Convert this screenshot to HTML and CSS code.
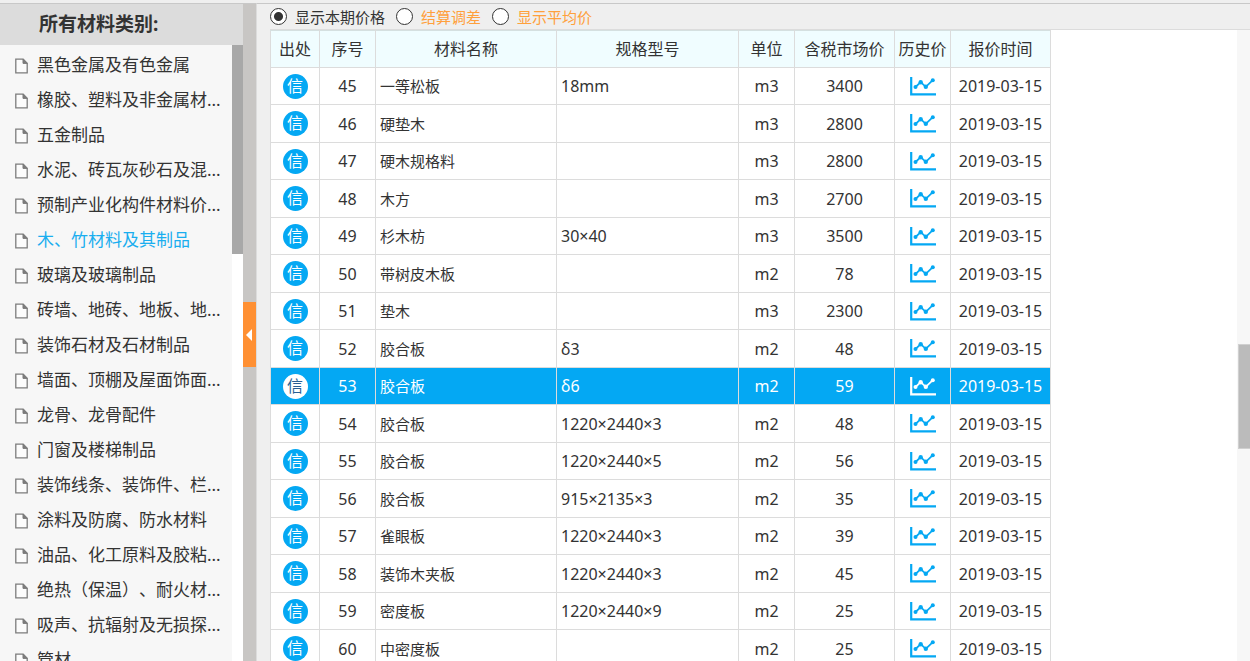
FILE: index.html
```html
<!DOCTYPE html>
<html lang="zh-CN">
<head>
<meta charset="utf-8">
<title>材料价格</title>
<link rel="stylesheet" href="styles.css">
</head>
<body>
<svg class="sprite" aria-hidden="true">
  <symbol id="doc" viewBox="0 0 13 16"><path d="M.8 1.2h7.4l4 4v9.6H.8z" fill="#fcfcfc" stroke="#7d7d7d" stroke-width="1.3"/><path d="M8 1.2v4.2h4.2z" fill="#7d7d7d" stroke="#7d7d7d"/></symbol>
  <symbol id="chart" viewBox="0 0 26 19"><path d="M1.2 0v17.3H26" fill="none" stroke="currentColor" stroke-width="2.2"/><path d="M5.5 10l5.2-4.8 5.1 4.6 7-6.6" fill="none" stroke="currentColor" stroke-width="1.8"/><g fill="currentColor"><circle cx="5.5" cy="10" r="2"/><circle cx="10.7" cy="5.2" r="2.2"/><circle cx="15.8" cy="9.8" r="2.2"/><circle cx="22.8" cy="3.2" r="2"/></g></symbol>
</svg>
<div class="app">
  <aside class="sidebar">
    <h2 class="sidebar-title">所有材料类别:</h2>
    <div class="sidebar-body">
      <nav class="categories">
        <a href="#"><svg><use href="#doc"/></svg>黑色金属及有色金属</a>
        <a href="#"><svg><use href="#doc"/></svg>橡胶、塑料及非金属材...</a>
        <a href="#"><svg><use href="#doc"/></svg>五金制品</a>
        <a href="#"><svg><use href="#doc"/></svg>水泥、砖瓦灰砂石及混...</a>
        <a href="#"><svg><use href="#doc"/></svg>预制产业化构件材料价...</a>
        <a href="#" class="current"><svg><use href="#doc"/></svg>木、竹材料及其制品</a>
        <a href="#"><svg><use href="#doc"/></svg>玻璃及玻璃制品</a>
        <a href="#"><svg><use href="#doc"/></svg>砖墙、地砖、地板、地...</a>
        <a href="#"><svg><use href="#doc"/></svg>装饰石材及石材制品</a>
        <a href="#"><svg><use href="#doc"/></svg>墙面、顶棚及屋面饰面...</a>
        <a href="#"><svg><use href="#doc"/></svg>龙骨、龙骨配件</a>
        <a href="#"><svg><use href="#doc"/></svg>门窗及楼梯制品</a>
        <a href="#"><svg><use href="#doc"/></svg>装饰线条、装饰件、栏...</a>
        <a href="#"><svg><use href="#doc"/></svg>涂料及防腐、防水材料</a>
        <a href="#"><svg><use href="#doc"/></svg>油品、化工原料及胶粘...</a>
        <a href="#"><svg><use href="#doc"/></svg>绝热（保温）、耐火材...</a>
        <a href="#"><svg><use href="#doc"/></svg>吸声、抗辐射及无损探...</a>
        <a href="#"><svg><use href="#doc"/></svg>管材</a>
      </nav>
      <div class="side-track"><div class="side-thumb"></div></div>
    </div>
  </aside>
  <div class="splitter"><button class="collapse" type="button" aria-label="收起"><svg viewBox="0 0 6 12"><path d="M6 0v12L0 6z" fill="#fff"/></svg></button></div>
  <main class="content">
    <form class="modes">
      <label><input type="radio" name="mode" checked><span>显示本期价格</span></label>
      <label class="accent"><input type="radio" name="mode"><span>结算调差</span></label>
      <label class="accent"><input type="radio" name="mode"><span>显示平均价</span></label>
    </form>
    <div class="panel">
      <div class="table-area">
        <table class="prices">
          <colgroup><col class="c-source"><col class="c-small"><col class="c-name"><col class="c-spec"><col class="c-small"><col class="c-wide"><col class="c-small"><col class="c-wide"></colgroup>
          <thead><tr><th>出处</th><th>序号</th><th>材料名称</th><th>规格型号</th><th>单位</th><th>含税市场价</th><th>历史价</th><th>报价时间</th></tr></thead>
          <tbody>
            <tr><td><span class="badge">信</span></td><td>45</td><td class="name">一等松板</td><td class="spec">18mm</td><td>m3</td><td>3400</td><td><button class="history" type="button" aria-label="历史价"><svg><use href="#chart"/></svg></button></td><td>2019-03-15</td></tr>
            <tr><td><span class="badge">信</span></td><td>46</td><td class="name">硬垫木</td><td class="spec"></td><td>m3</td><td>2800</td><td><button class="history" type="button" aria-label="历史价"><svg><use href="#chart"/></svg></button></td><td>2019-03-15</td></tr>
            <tr><td><span class="badge">信</span></td><td>47</td><td class="name">硬木规格料</td><td class="spec"></td><td>m3</td><td>2800</td><td><button class="history" type="button" aria-label="历史价"><svg><use href="#chart"/></svg></button></td><td>2019-03-15</td></tr>
            <tr><td><span class="badge">信</span></td><td>48</td><td class="name">木方</td><td class="spec"></td><td>m3</td><td>2700</td><td><button class="history" type="button" aria-label="历史价"><svg><use href="#chart"/></svg></button></td><td>2019-03-15</td></tr>
            <tr><td><span class="badge">信</span></td><td>49</td><td class="name">杉木枋</td><td class="spec">30×40</td><td>m3</td><td>3500</td><td><button class="history" type="button" aria-label="历史价"><svg><use href="#chart"/></svg></button></td><td>2019-03-15</td></tr>
            <tr><td><span class="badge">信</span></td><td>50</td><td class="name">带树皮木板</td><td class="spec"></td><td>m2</td><td>78</td><td><button class="history" type="button" aria-label="历史价"><svg><use href="#chart"/></svg></button></td><td>2019-03-15</td></tr>
            <tr><td><span class="badge">信</span></td><td>51</td><td class="name">垫木</td><td class="spec"></td><td>m3</td><td>2300</td><td><button class="history" type="button" aria-label="历史价"><svg><use href="#chart"/></svg></button></td><td>2019-03-15</td></tr>
            <tr><td><span class="badge">信</span></td><td>52</td><td class="name">胶合板</td><td class="spec">δ3</td><td>m2</td><td>48</td><td><button class="history" type="button" aria-label="历史价"><svg><use href="#chart"/></svg></button></td><td>2019-03-15</td></tr>
            <tr class="selected"><td><span class="badge">信</span></td><td>53</td><td class="name">胶合板</td><td class="spec">δ6</td><td>m2</td><td>59</td><td><button class="history" type="button" aria-label="历史价"><svg><use href="#chart"/></svg></button></td><td>2019-03-15</td></tr>
            <tr><td><span class="badge">信</span></td><td>54</td><td class="name">胶合板</td><td class="spec">1220×2440×3</td><td>m2</td><td>48</td><td><button class="history" type="button" aria-label="历史价"><svg><use href="#chart"/></svg></button></td><td>2019-03-15</td></tr>
            <tr><td><span class="badge">信</span></td><td>55</td><td class="name">胶合板</td><td class="spec">1220×2440×5</td><td>m2</td><td>56</td><td><button class="history" type="button" aria-label="历史价"><svg><use href="#chart"/></svg></button></td><td>2019-03-15</td></tr>
            <tr><td><span class="badge">信</span></td><td>56</td><td class="name">胶合板</td><td class="spec">915×2135×3</td><td>m2</td><td>35</td><td><button class="history" type="button" aria-label="历史价"><svg><use href="#chart"/></svg></button></td><td>2019-03-15</td></tr>
            <tr><td><span class="badge">信</span></td><td>57</td><td class="name">雀眼板</td><td class="spec">1220×2440×3</td><td>m2</td><td>39</td><td><button class="history" type="button" aria-label="历史价"><svg><use href="#chart"/></svg></button></td><td>2019-03-15</td></tr>
            <tr><td><span class="badge">信</span></td><td>58</td><td class="name">装饰木夹板</td><td class="spec">1220×2440×3</td><td>m2</td><td>45</td><td><button class="history" type="button" aria-label="历史价"><svg><use href="#chart"/></svg></button></td><td>2019-03-15</td></tr>
            <tr><td><span class="badge">信</span></td><td>59</td><td class="name">密度板</td><td class="spec">1220×2440×9</td><td>m2</td><td>25</td><td><button class="history" type="button" aria-label="历史价"><svg><use href="#chart"/></svg></button></td><td>2019-03-15</td></tr>
            <tr><td><span class="badge">信</span></td><td>60</td><td class="name">中密度板</td><td class="spec"></td><td>m2</td><td>25</td><td><button class="history" type="button" aria-label="历史价"><svg><use href="#chart"/></svg></button></td><td>2019-03-15</td></tr>
          </tbody>
        </table>
      </div>
      <div class="main-track"><div class="main-thumb"></div></div>
    </div>
  </main>
</div>
</body>
</html>
```

FILE: styles.css
```css
* { box-sizing: border-box; }

body {
  margin: 0;
  background: #efefef;
  color: #333;
  font-family: "Noto Sans", "Noto Sans CJK SC", sans-serif;
  font-size: 16px;
  text-spacing-trim: space-all;
}

.sprite { display: none; }

.app {
  display: flex;
  height: 100vh;
  padding-top: 3px;
  overflow: hidden;
}

/* Category list */
.sidebar {
  display: flex;
  flex-direction: column;
  flex: 0 0 243px;
  border-top: 1px solid #c8c8c8;
  background: #f7f7f7;
}

.sidebar-title {
  flex: none;
  margin: 0;
  padding-left: 39px;
  background: #dcdcdc;
  font-size: 19px;
  line-height: 41px;
}

.sidebar-body {
  display: flex;
  flex: 1;
  min-height: 0;
}

.categories {
  flex: 1;
  min-width: 0;
  padding-top: 2px;
  overflow: hidden;
}

.categories a {
  display: flex;
  align-items: center;
  gap: 9px;
  height: 35px;
  padding-left: 15px;
  color: #333;
  font-size: 17px;
  line-height: 35px;
  text-decoration: none;
  white-space: nowrap;
}

.categories .current { color: #1aaeef; }

.categories svg {
  flex: none;
  width: 13px;
  height: 16px;
  margin-top: 3px;
}

.side-track {
  flex: 0 0 11px;
  background: #fff;
}

.side-thumb {
  height: 34%;
  background: #a8a8a8;
}

.splitter {
  display: flex;
  flex: 0 0 13px;
  align-items: center;
  padding-top: 4px;
  border-top: 1px solid #c8c8c8;
  border-right: 1px solid #dcdcdc;
  background: #c8c6c4;
}

.collapse {
  flex: 0 0 13px;
  height: 65px;
  padding: 0 0 0 3px;
  border: 0;
  background: #ff9033;
}

.collapse svg {
  display: block;
  width: 6px;
  height: 12px;
}

/* Price panel */
.content {
  display: flex;
  flex-direction: column;
  flex: 1;
  min-width: 0;
  border-top: 1px solid #c8c8c8;
}

.modes {
  display: flex;
  flex: none;
  gap: 11px;
  height: 25px;
  padding-left: 13px;
  font-size: 15px;
}

.modes label {
  display: flex;
  align-items: center;
  gap: 8px;
}

.modes .accent { color: #ffa03c; }

.modes input {
  width: 17px;
  height: 17px;
  margin: 0;
  border: 1px solid #333;
  border-radius: 50%;
  background: #fff;
  appearance: none;
}

.modes input:checked {
  background: radial-gradient(circle, #333 4px, #fff 5px);
}

.panel {
  display: flex;
  flex: 1;
  min-height: 0;
  margin-left: 13px;
  border-top: 1px solid #dcdcdc;
  background: #fff;
}

.table-area {
  flex: 1;
  min-width: 0;
  overflow: hidden;
}

.prices {
  width: 781px;
  border-collapse: collapse;
  table-layout: fixed;
}

.c-source { width: 49px; }
.c-small { width: 56px; }
.c-name { width: 181px; }
.c-spec { width: 182px; }
.c-wide { width: 100px; }

.prices th,
.prices td {
  height: 37px;
  padding: 0;
  border: 1px solid #dcdcdc;
  line-height: 24px;
  text-align: center;
  white-space: nowrap;
}

.prices th {
  border-top-color: #d5e0e0;
  background: #f0fdff;
  font-weight: 400;
}

.prices tr:nth-child(even) td { height: 38px; }

.prices .name {
  padding-left: 4px;
  font-size: 15px;
  text-align: left;
}

.prices .spec {
  padding-left: 4px;
  text-align: left;
}

.badge {
  display: block;
  width: 25px;
  height: 25px;
  margin: 0 auto;
  border-radius: 50%;
  background: #04a8f3;
  color: #fff;
  font-size: 16px;
  line-height: 24px;
}

.history {
  display: block;
  width: 26px;
  height: 19px;
  margin: 0 auto;
  padding: 0;
  border: 0;
  background: none;
  color: #04a8f3;
}

.history svg {
  display: block;
  width: 26px;
  height: 19px;
}

.selected td {
  background: #04a8f3;
  color: #fff;
}

.selected .badge {
  background: #fff;
  color: #285f94;
}

.selected .history { color: #fff; }

.main-track {
  display: flex;
  flex: 0 0 13px;
  flex-direction: column;
  justify-content: center;
  padding: 102px 0 0 1px;
  background: #f7f7f7;
}

.main-thumb {
  height: 105px;
  border: 1px solid #d0d0d0;
  border-right: 0;
  background: #bbb;
}
```
